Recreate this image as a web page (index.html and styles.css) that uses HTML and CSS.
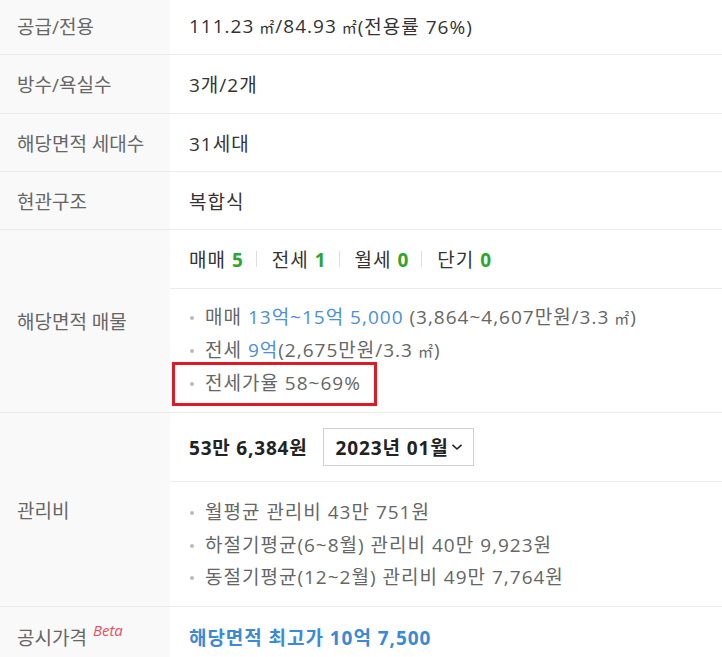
FILE: index.html
```html
<!DOCTYPE html>
<html lang="ko">
<head>
<meta charset="utf-8">
<link rel="stylesheet" href="styles.css">
</head>
<body>
<div class="tbl">
  <div class="row r1">
    <div class="th">공급/전용</div>
    <div class="td"><div class="cell">111.23<span class="m2">㎡</span>/84.93<span class="m2">㎡</span>(전용률 76%)</div></div>
  </div>
  <div class="row r2">
    <div class="th">방수/욕실수</div>
    <div class="td"><div class="cell">3개/2개</div></div>
  </div>
  <div class="row r3">
    <div class="th">해당면적 세대수</div>
    <div class="td"><div class="cell">31세대</div></div>
  </div>
  <div class="row r4">
    <div class="th">현관구조</div>
    <div class="td"><div class="cell">복합식</div></div>
  </div>
  <div class="row r5">
    <div class="th">해당면적 매물</div>
    <div class="td">
      <div class="cell tabs">
        <span class="tab">매매 <b class="g">5</b></span><i class="sep"></i>
        <span class="tab">전세 <b class="g">1</b></span><i class="sep"></i>
        <span class="tab">월세 <b class="g">0</b></span><i class="sep"></i>
        <span class="tab">단기 <b class="g">0</b></span>
      </div>
      <ul class="list l5">
        <li>매매 <span class="blue">13억~15억 5,000</span> (3,864~4,607만원/3.3<span class="m2">㎡</span>)</li>
        <li>전세 <span class="blue">9억</span>(2,675만원/3.3<span class="m2">㎡</span>)</li>
        <li class="boxed">전세가율 58~69%</li>
      </ul>
    </div>
  </div>
  <div class="row r6">
    <div class="th">관리비</div>
    <div class="td">
      <div class="cell fee">
        <strong class="total">53만 6,384원</strong>
        <span class="select">2023년 01월<svg class="chev" width="12" height="8" viewBox="0 0 12 8"><path d="M1.5 1.8 L6 6 L10.5 1.8" fill="none" stroke="#222" stroke-width="1.6"/></svg></span>
      </div>
      <ul class="list l6">
        <li>월평균 관리비 43만 751원</li>
        <li>하절기평균(6~8월) 관리비 40만 9,923원</li>
        <li>동절기평균(12~2월) 관리비 49만 7,764원</li>
      </ul>
    </div>
  </div>
  <div class="row r7">
    <div class="th">공시가격 <em class="beta">Beta</em></div>
    <div class="td"><div class="cell"><strong class="price">해당면적 최고가 10억 7,500</strong></div></div>
  </div>
</div>
</body>
</html>
```
FILE: styles.css
```css
html, body {
  margin: 0;
  padding: 0;
  background: #fff;
}
body {
  font-family: "Open Sans", "Noto Sans CJK KR", sans-serif;
  font-size: 19px;
  color: #333;
  width: 722px;
  height: 657px;
  overflow: hidden;
}
.tbl {
  display: flex;
  flex-direction: column;
  margin-top: -2px;
}
.row {
  display: flex;
  border-bottom: 1px solid #ececec;
}
.th {
  width: 170px;
  flex: none;
  background: #f9f9f9;
  color: #666;
  padding-left: 17px;
  box-sizing: border-box;
  display: flex;
  align-items: center;
  letter-spacing: 0;
}
.td {
  flex: 1;
  display: flex;
  flex-direction: column;
  justify-content: center;
}
.cell {
  padding-left: 19px;
  display: flex;
  align-items: center;
  white-space: pre;
  letter-spacing: 1px;
}
.m2 {
  font-size: 15px;
  margin: 0 1px 0 5px;
  letter-spacing: 0;
}
.r1 { height: 56px; }
.r2 { height: 58px; }
.r3 { height: 57px; }
.r4 { height: 57px; }
.r5 { height: 182px; }
.r6 { height: 193px; }
.r7 { height: 60px; border-bottom: none; }

.r5 .td, .r6 .td { justify-content: flex-start; }
.tabs {
  height: 58px;
  border-bottom: 1px solid #ececec;
  color: #333;
}
.tab b.g {
  color: #2ea52e;
  font-weight: 700;
}
.sep {
  width: 1px;
  height: 16px;
  background: #dedede;
  margin: 0 15px 0 12px;
}
.list {
  list-style: none;
  margin: 0;
  padding: 0;
  color: #666;
}
.l5 { padding-top: 12px; }
.list li {
  position: relative;
  padding-left: 35px;
  height: 32.5px;
  line-height: 32px;
  white-space: pre;
  letter-spacing: 1px;
}
.list li::before {
  content: "";
  position: absolute;
  left: 20px;
  top: 15px;
  width: 4px;
  height: 4px;
  border-radius: 50%;
  background: #bbb;
}
.blue { color: #4b8fdb; }
.boxed {
  width: 205px;
  box-sizing: border-box;
  margin-left: 2px;
  border: 3px solid #df1a25;
  height: 44px !important;
  line-height: 36px !important;
  padding-left: 30px !important;
  margin-top: -4px;
}
.boxed::before { left: 15px !important; top: 17px !important; }
.fee {
  height: 68px;
  border-bottom: 1px solid #ececec;
  color: #222;
}
.total {
  font-weight: 700;
  letter-spacing: 0.8px;
}
.select {
  margin-left: 15px;
  border: 1px solid #cfcfcf;
  height: 38px;
  box-sizing: border-box;
  padding: 0 10px 0 12px;
  display: flex;
  align-items: center;
  font-weight: 700;
  color: #222;
  letter-spacing: 0.9px;
}
.chev { margin-left: 2px; }
.l6 { padding-top: 14px; }
.beta {
  color: #e8505b;
  font-size: 15px;
  font-style: italic;
  align-self: flex-start;
  margin-top: 13px;
  margin-left: 6px;
}
.price {
  color: #3b8ad8;
  font-weight: 700;
  letter-spacing: 0.95px;
}
```
